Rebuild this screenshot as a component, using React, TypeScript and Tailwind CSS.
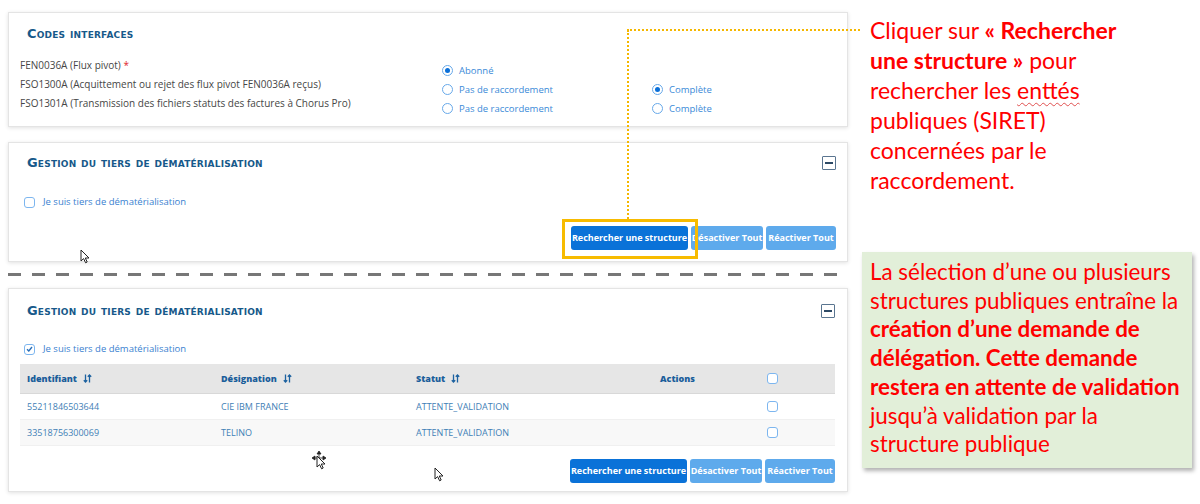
import type { ReactNode } from "react";

const ui = { fontFamily: '"Open Sans", "Liberation Sans", sans-serif' };
const office = { fontFamily: 'Lato, "Liberation Sans", sans-serif' };
const heading = { fontFamily: '"DejaVu Sans", "Open Sans", sans-serif' };

const Title = ({ children }: { children: ReactNode }) => (
  <h2
    className="pl-[7px] text-[13px] leading-[14px] font-bold text-[#17598a] [font-variant-caps:small-caps] tracking-[0.2px]"
    style={heading}
  >
    {children}
  </h2>
);

const MinusIcon = () => (
  <div className="w-[14px] h-[14px] border-[1.5px] border-[#5a7590] rounded-[1px] flex items-center justify-center bg-white">
    <div className="w-[8px] h-[2px] bg-[#2e4a66]" />
  </div>
);

const Radio = ({ checked, label }: { checked?: boolean; label: string }) => (
  <div className="flex items-center gap-[6px] h-[19px] text-[9.5px] text-[#3a8ad8]">
    <span className="w-[11px] h-[11px] rounded-full border border-[#67a9ea] flex items-center justify-center bg-white">
      {checked && <span className="w-[5px] h-[5px] rounded-full bg-[#0a6fd8]" />}
    </span>
    <span>{label}</span>
  </div>
);

const Checkbox = ({ checked }: { checked?: boolean }) => (
  <span className="w-[11px] h-[11px] rounded-[3px] border-[1.5px] border-[#7db6ef] flex items-center justify-center bg-white">
    {checked && (
      <svg width="7" height="6" viewBox="0 0 7 6">
        <path d="M1 3.2 L2.8 5 L6 1" fill="none" stroke="#2a6fb8" strokeWidth="1.4" />
      </svg>
    )}
  </span>
);

const SortIcon = () => (
  <svg width="9" height="9" viewBox="0 0 9 9" className="ml-[6px]">
    <path d="M2.5 0.5 V8 M0.8 6.2 L2.5 8 L4.2 6.2" fill="none" stroke="#1d62a0" strokeWidth="1.3" />
    <path d="M6.5 8.5 V1 M4.8 2.8 L6.5 1 L8.2 2.8" fill="none" stroke="#1d62a0" strokeWidth="1.3" />
  </svg>
);

const Buttons = () => (
  <div className="flex justify-end gap-[3px] text-[9px] font-bold text-white">
    <button className="w-[117px] h-[24px] rounded-[3px] bg-[#0a72d8]">Rechercher une structure</button>
    <button className="w-[72px] h-[24px] rounded-[3px] bg-[#5eaaec]">Désactiver Tout</button>
    <button className="w-[70px] h-[24px] rounded-[3px] bg-[#5eaaec]">Réactiver Tout</button>
  </div>
);

const Pointer = ({ x, y }: { x: number; y: number }) => (
  <svg width="11" height="15" viewBox="0 0 11 15" className="absolute" style={{ left: x, top: y }}>
    <path d="M1 1 V12 L3.6 9.6 L5.6 13.8 L7.2 13 L5.3 9 H9 Z" fill="white" stroke="#222" strokeWidth="1" />
  </svg>
);

const rows = [
  { id: "55211846503644", name: "CIE IBM FRANCE", bg: "bg-white" },
  { id: "33518756300069", name: "TELINO", bg: "bg-[#f8f8f8]" },
];

const App = () => {
  return (
    <div className="relative w-[1200px] h-[504px] bg-white overflow-hidden flex" style={ui}>
      <div className="w-[852px] pl-2 pt-3 flex flex-col">
        {/* Codes interfaces */}
        <div className="w-[840px] h-[115px] bg-white border border-[#e4e4e4] shadow-[0_1px_4px_rgba(0,0,0,0.12)] pl-[11px] pt-[14px]">
          <Title>Codes interfaces</Title>
          <div className="mt-[15px] flex text-[10px] leading-[19px]">
            <div className="w-[422px] text-[#464646]">
              <div>
                FEN0036A (Flux pivot) <span className="text-[#e0262b]">*</span>
              </div>
              <div>FSO1300A (Acquittement ou rejet des flux pivot FEN0036A reçus)</div>
              <div>FSO1301A (Transmission des fichiers statuts des factures à Chorus Pro)</div>
            </div>
            <div className="w-[210px] pt-[5px]">
              <Radio checked label="Abonné" />
              <Radio label="Pas de raccordement" />
              <Radio label="Pas de raccordement" />
            </div>
            <div className="pt-[24px]">
              <Radio checked label="Complète" />
              <Radio label="Complète" />
            </div>
          </div>
        </div>

        {/* Gestion du tiers - before */}
        <div className="mt-[15px] w-[840px] h-[120px] bg-white border border-[#e4e4e4] shadow-[0_1px_4px_rgba(0,0,0,0.12)] px-[11px] pt-[13px] flex flex-col">
          <div className="flex items-center justify-between h-[14px]">
            <Title>Gestion du tiers de dématérialisation</Title>
            <MinusIcon />
          </div>
          <div className="mt-[25px] ml-[4px] flex items-center gap-[8px] h-[14px] text-[9.5px] text-[#3a7fd0]">
            <Checkbox />
            <span>Je suis tiers de dématérialisation</span>
          </div>
          <div className="mt-[17px]">
            <Buttons />
          </div>
        </div>

        <div className="mt-[11px] h-[3px] w-[840px] bg-[repeating-linear-gradient(90deg,#777_0_13px,transparent_13px_24px)]" />

        {/* Gestion du tiers - after */}
        <div className="mt-[12px] w-[840px] h-[204px] bg-white border border-[#e4e4e4] shadow-[0_1px_4px_rgba(0,0,0,0.12)] pl-[11px] pr-[12px] pt-[15px] flex flex-col">
          <div className="flex items-center justify-between h-[14px]">
            <Title>Gestion du tiers de dématérialisation</Title>
            <MinusIcon />
          </div>
          <div className="mt-[24px] ml-[4px] flex items-center gap-[8px] h-[14px] text-[9.5px] text-[#3a7fd0]">
            <Checkbox checked />
            <span>Je suis tiers de dématérialisation</span>
          </div>
          <div className="mt-[8px] w-[815px] text-[9px]">
            <div className="h-[30px] bg-[#e6e6e6] flex items-center font-extrabold text-[#1b5e9b] border-b border-[#d8d8d8]">
              <div className="w-[201px] pl-[7px] flex items-center">
                Identifiant <SortIcon />
              </div>
              <div className="w-[195px] flex items-center">
                Désignation <SortIcon />
              </div>
              <div className="w-[244px] flex items-center">
                Statut <SortIcon />
              </div>
              <div className="w-[107px]">Actions</div>
              <Checkbox />
            </div>
            {rows.map((r) => (
              <div key={r.id} className={`h-[26px] ${r.bg} flex items-center text-[#3f80b6] border-b border-[#f0f0f0]`}>
                <div className="w-[201px] pl-[7px]">{r.id}</div>
                <div className="w-[195px]">{r.name}</div>
                <div className="w-[351px]">ATTENTE_VALIDATION</div>
                <Checkbox />
              </div>
            ))}
          </div>
          <div className="mt-[13px] w-[815px]">
            <Buttons />
          </div>
        </div>
      </div>

      {/* Annotations */}
      <div className="flex-1 flex flex-col pl-[18px] text-[#ff0000]" style={office}>
        <p className="mt-[15px] text-[23px] leading-[30px] whitespace-nowrap">
          Cliquer sur <b>« Rechercher</b>
          <br />
          <b>une structure »</b> pour
          <br />
          rechercher les{" "}
          <span className="underline decoration-wavy decoration-[#e0504f] decoration-1 underline-offset-[3px]">enttés</span>
          <br />
          publiques (SIRET)
          <br />
          concernées par le
          <br />
          raccordement.
        </p>
        <div className="mt-[57px] -ml-[8px] w-[330px] h-[216px] bg-[#e2efd9] shadow-[2px_3px_4px_rgba(0,0,0,0.3)] pl-[8px] pt-[6px] text-[22.4px] leading-[28.7px] whitespace-nowrap">
          La sélection d’une ou plusieurs
          <br />
          structures publiques entraîne la
          <br />
          <b>création d’une demande de</b>
          <br />
          <b>délégation. Cette demande</b>
          <br />
          <b>restera en attente de validation</b>
          <br />
          jusqu’à validation par la
          <br />
          structure publique
        </div>
      </div>

      {/* Overlays: callout line and highlight */}
      <div className="absolute left-[627px] top-[30px] w-0 h-[189px] border-l-2 border-dotted border-[#f5b700]" />
      <div className="absolute left-[627px] top-[29px] w-[233px] h-0 border-t-2 border-dotted border-[#f5b700]" />
      <div className="absolute left-[562px] top-[219px] w-[136px] h-[40px] border-[3px] border-[#f7bb00]" />

      <Pointer x={80} y={249} />
      <Pointer x={434} y={467} />
      <div className="absolute left-[311px] top-[450px]">
        <svg width="20" height="24" viewBox="0 0 20 24">
          <path d="M8 1 L10 4 H6 Z M8 4 V10 M1 8 L4 6 V10 Z M4 8 H12 M15 8 L12 6 V10 Z" fill="#222" stroke="#222" strokeWidth="0.8" />
        </svg>
      </div>
      <Pointer x={316} y={455} />
    </div>
  );
};

export default App;
